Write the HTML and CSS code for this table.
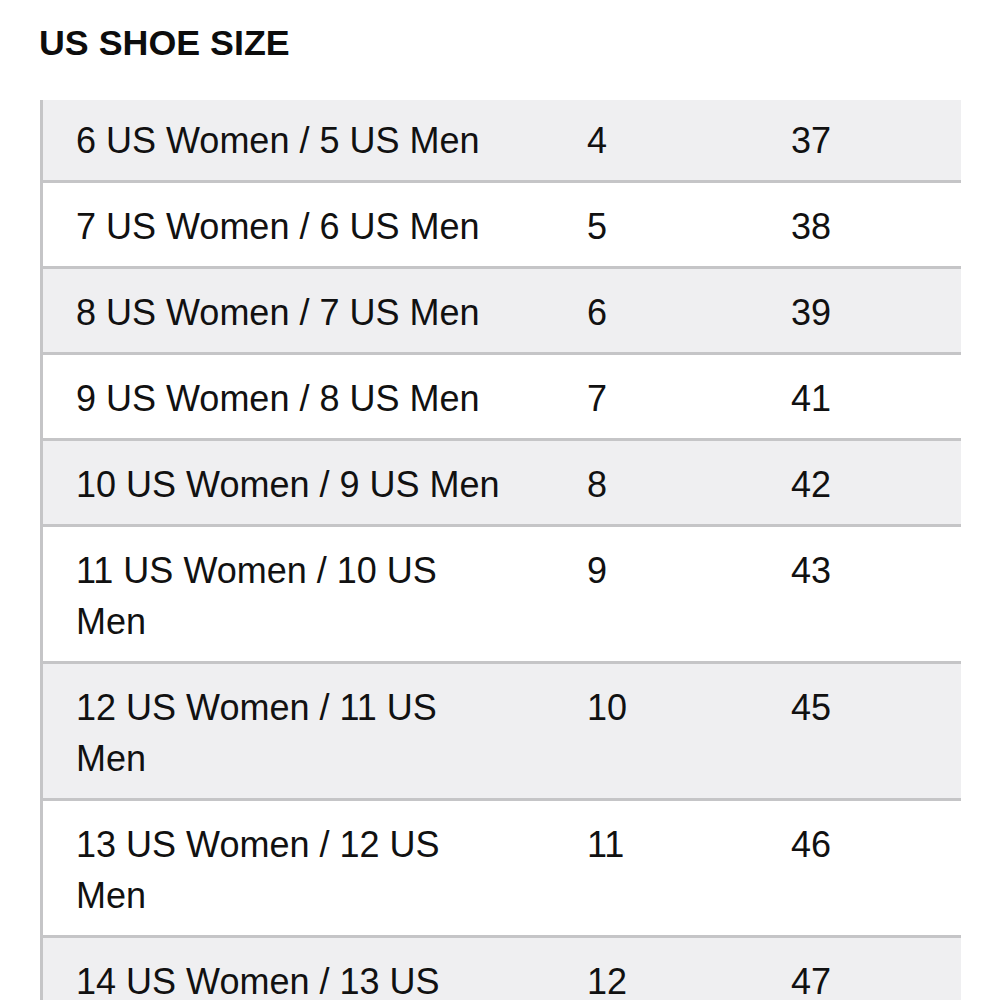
FILE: index.html
```html
<!DOCTYPE html>
<html>
<head>
<meta charset="utf-8">
<link rel="stylesheet" href="styles.css">
</head>
<body>
<h1 class="title">US SHOE SIZE</h1>
<table class="sizes">
  <colgroup>
    <col class="c1"><col class="c2"><col class="c3">
  </colgroup>
  <tbody>
    <tr class="alt first"><td>6 US Women / 5 US Men</td><td>4</td><td>37</td></tr>
    <tr><td>7 US Women / 6 US Men</td><td>5</td><td>38</td></tr>
    <tr class="alt"><td>8 US Women / 7 US Men</td><td>6</td><td>39</td></tr>
    <tr><td>9 US Women / 8 US Men</td><td>7</td><td>41</td></tr>
    <tr class="alt"><td>10 US Women / 9 US Men</td><td>8</td><td>42</td></tr>
    <tr><td>11 US Women / 10 US Men</td><td>9</td><td>43</td></tr>
    <tr class="alt"><td>12 US Women / 11 US Men</td><td>10</td><td>45</td></tr>
    <tr><td>13 US Women / 12 US Men</td><td>11</td><td>46</td></tr>
    <tr class="alt"><td>14 US Women / 13 US Men</td><td>12</td><td>47</td></tr>
  </tbody>
</table>
</body>
</html>
```
FILE: styles.css
```css
html, body {
  margin: 0;
  padding: 0;
  background: #ffffff;
}
body {
  font-family: "Liberation Sans", Arial, sans-serif;
  color: #111111;
  overflow: hidden;
}
.title {
  margin: 26px 0 39px 39px;
  font-size: 35.8px;
  line-height: 35px;
  font-weight: bold;
  color: #0d0d0d;
}
.sizes {
  margin-left: 40px;
  width: 921px;
  table-layout: fixed;
  border-collapse: separate;
  border-spacing: 0;
  border-left: 3px solid #c5c5c7;
}
.c1 { width: 511px; }
.c2 { width: 204px; }
.c3 { width: 203px; }
.sizes td {
  font-size: 36px;
  line-height: 51px;
  padding: 18px 40px 14px 33px;
  vertical-align: top;
  border-bottom: 3px solid #c5c5c7;
  background: #ffffff;
}
.sizes tr.alt td {
  background: #efeff1;
}
.sizes tr.first td {
  padding-top: 15px;
}
```
